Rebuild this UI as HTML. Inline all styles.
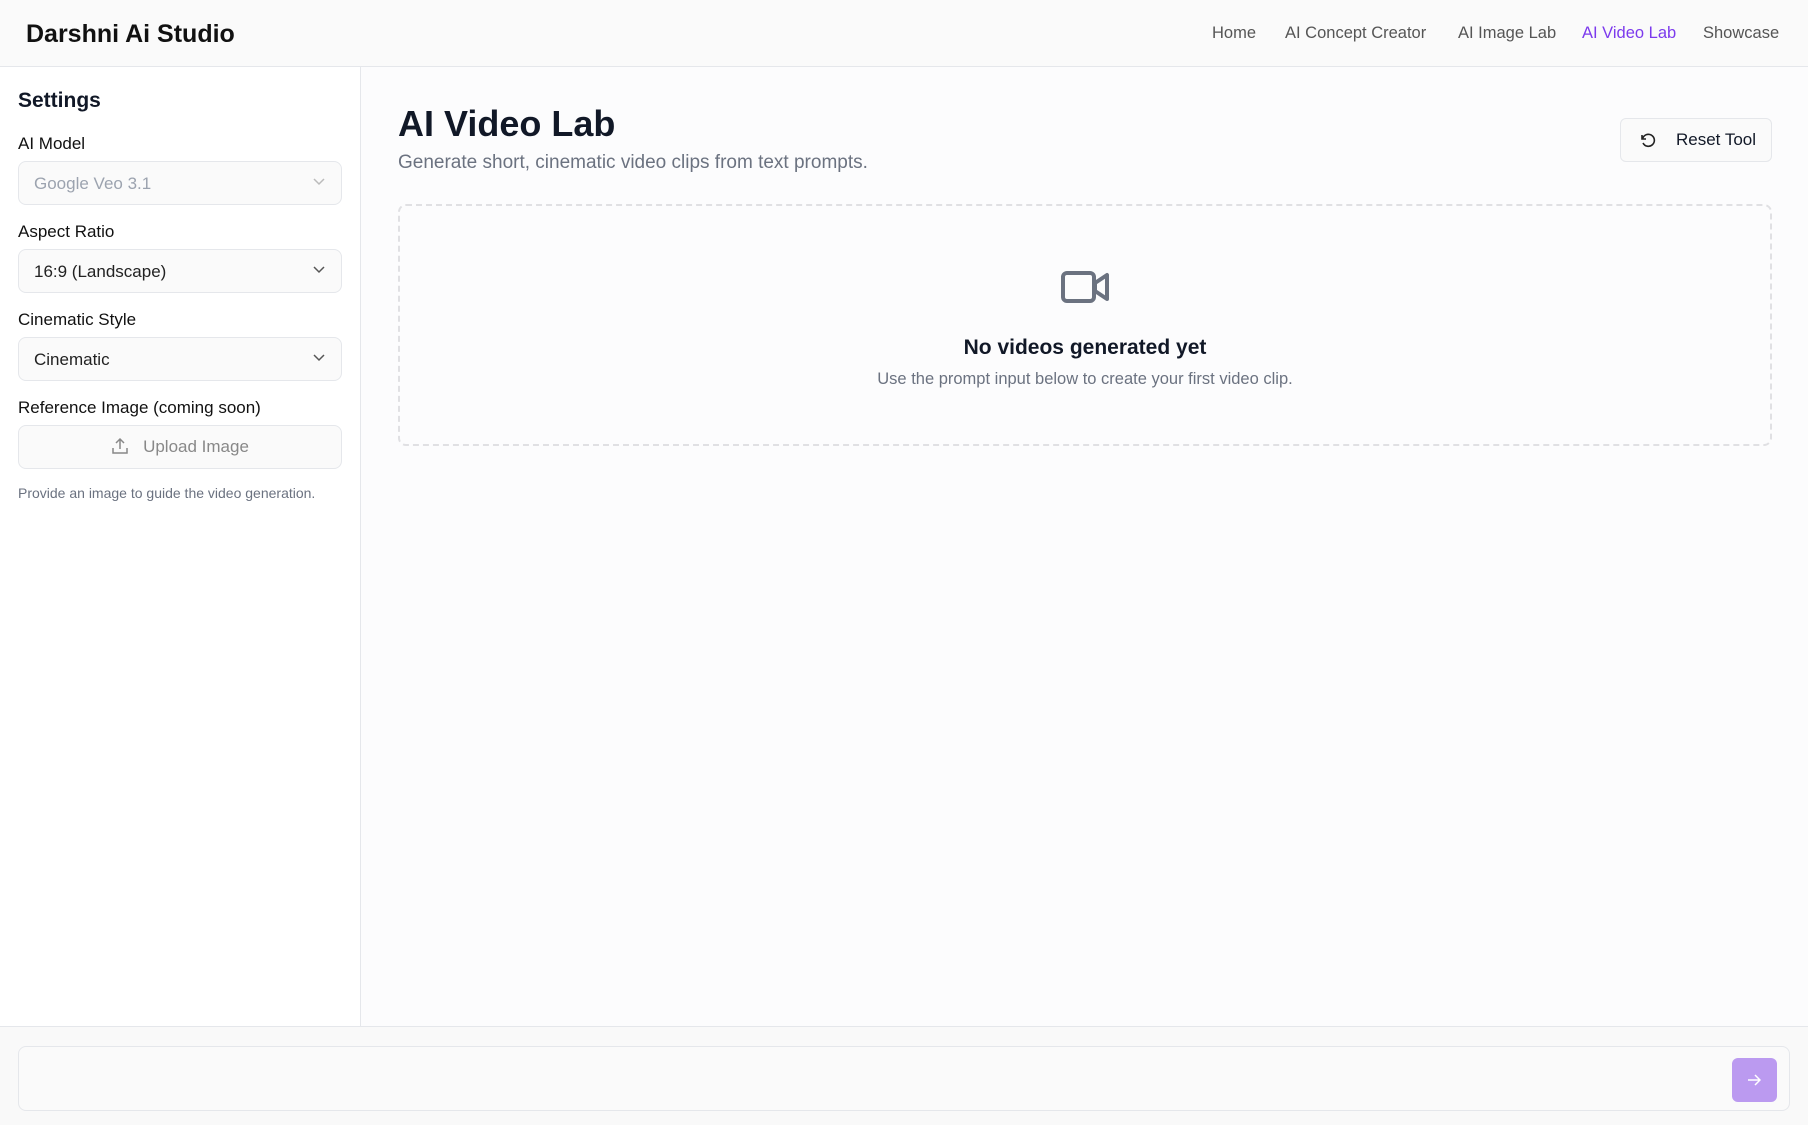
<!DOCTYPE html>
<html><head><meta charset="utf-8"><style>
*{box-sizing:border-box;margin:0;padding:0}
body{width:1808px;height:1125px;overflow:hidden;font-family:"Liberation Sans",sans-serif;background:#fcfcfd;position:relative;color:#111827}
.hdr{position:absolute;left:0;top:0;width:1808px;height:67px;background:#fafafa;border-bottom:1px solid #e5e7eb}
.logo{position:absolute;left:26px;top:20px;font-size:25px;font-weight:bold;color:#111}
.nav a{position:absolute;top:24px;font-size:16.5px;color:#555;text-decoration:none}
.side{position:absolute;left:0;top:67px;width:361px;height:959px;background:#fff;border-right:1px solid #e5e7eb}
.lbl{position:absolute;left:18px;font-size:17px;color:#111}
.sel{position:absolute;left:18px;width:324px;height:44px;border:1px solid #e5e7eb;border-radius:8px;background:#fafafa;font-size:17px;padding:12px 0 0 15px;color:#222}
.sel svg{position:absolute;right:16px;top:16px}
.main{position:absolute;left:362px;top:67px;right:0;height:959px}
.bot{position:absolute;left:0;top:1026px;width:1808px;height:99px;background:#f9f9f9;border-top:1px solid #e5e7eb}
</style></head><body>
<div class="hdr"><div class="logo">Darshni Ai Studio</div>
<div class="nav"><a style="left:1212px">Home</a><a style="left:1285px">AI Concept Creator</a><a style="left:1458px">AI Image Lab</a><a style="left:1582px;color:#7c3aed">AI Video Lab</a><a style="left:1703px">Showcase</a></div></div>
<div class="side">
<div style="position:absolute;left:18px;top:22px;font-size:21px;font-weight:bold">Settings</div>
<div class="lbl" style="top:67px">AI Model</div>
<div class="sel" style="top:94px;color:#9ca3af">Google Veo 3.1<svg width="12" height="8" viewBox="0 0 12 8"><path d="M1 1l5 5 5-5" fill="none" stroke="#bbb" stroke-width="1.5"/></svg></div>
<div class="lbl" style="top:155px">Aspect Ratio</div>
<div class="sel" style="top:182px">16:9 (Landscape)<svg width="12" height="8" viewBox="0 0 12 8"><path d="M1 1l5 5 5-5" fill="none" stroke="#555" stroke-width="1.5"/></svg></div>
<div class="lbl" style="top:243px">Cinematic Style</div>
<div class="sel" style="top:270px">Cinematic<svg width="12" height="8" viewBox="0 0 12 8"><path d="M1 1l5 5 5-5" fill="none" stroke="#555" stroke-width="1.5"/></svg></div>
<div class="lbl" style="top:331px">Reference Image (coming soon)</div>
<div class="sel" style="top:358px;padding:0;text-align:center;line-height:42px;color:#888"><svg style="position:static;vertical-align:-3px;margin-right:14px" width="18" height="18" viewBox="0 0 18 18"><path d="M9 12V2M5 6l4-4 4 4M2 11v5h14v-5" fill="none" stroke="#888" stroke-width="1.5"/></svg>Upload Image</div>
<div style="position:absolute;left:18px;top:418px;font-size:14px;color:#6b7280">Provide an image to guide the video generation.</div>
</div>
<div class="main">
<div style="position:absolute;left:36px;top:36px;font-size:36px;font-weight:bold;color:#111827">AI Video Lab</div>
<div style="position:absolute;left:36px;top:85px;font-size:19px;color:#6b7280">Generate short, cinematic video clips from text prompts.</div>
<div style="position:absolute;left:1258px;top:51px;width:152px;height:44px;border:1px solid #e5e7eb;border-radius:6px;background:#fafafa;font-size:17px;line-height:42px;padding-left:55px">Reset Tool
<svg style="position:absolute;left:18px;top:12px" width="18" height="18" viewBox="0 0 18 18"><path d="M3 4v4h4M3.5 8A6 6 0 1 1 4 12" fill="none" stroke="#222" stroke-width="1.6"/></svg></div>
<div style="position:absolute;left:36px;top:137px;width:1374px;height:242px;border:2px dashed #e0e0e3;border-radius:8px">
<svg style="position:absolute;left:661px;top:64px" width="50" height="34" viewBox="0 0 50 34"><rect x="2" y="3" width="31" height="28" rx="4" fill="none" stroke="#6b7280" stroke-width="4"/><path d="M34 13l12-8v24l-12-8z" fill="none" stroke="#6b7280" stroke-width="4" stroke-linejoin="round"/></svg>
<div style="position:absolute;left:0;right:0;top:130px;text-align:center;font-size:21px;font-weight:bold">No videos generated yet</div>
<div style="position:absolute;left:0;right:0;top:164px;text-align:center;font-size:16.5px;color:#6b7280">Use the prompt input below to create your first video clip.</div>
</div></div>
<div class="bot"><div style="position:absolute;left:18px;top:19px;width:1772px;height:65px;border:1px solid #e5e7eb;border-radius:8px;background:#fafafa">
<div style="position:absolute;left:1713px;top:11px;width:45px;height:44px;border-radius:6px;background:#bb9af0"><svg style="position:absolute;left:15px;top:15px" width="14" height="14" viewBox="0 0 14 14"><path d="M1 7h12M8 2l5 5-5 5" fill="none" stroke="#fff" stroke-width="1.5"/></svg></div></div></div>
</body></html>
